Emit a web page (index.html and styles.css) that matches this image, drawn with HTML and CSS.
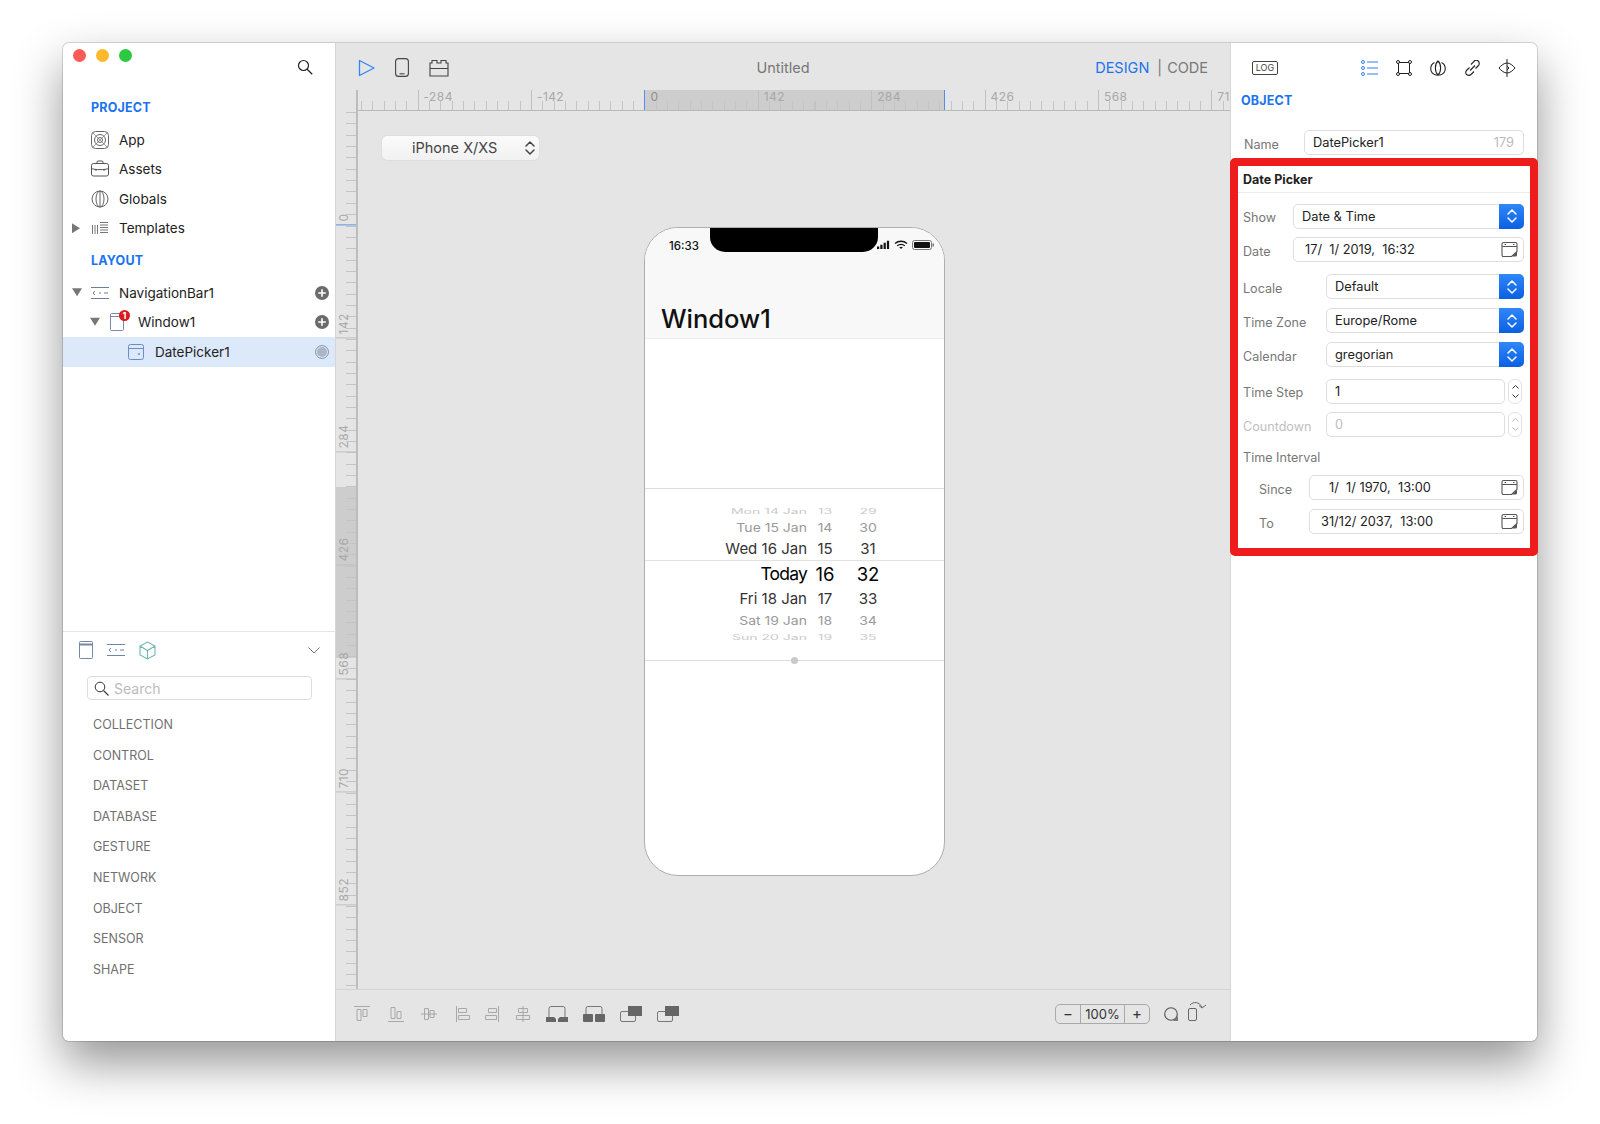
FILE: index.html
```html
<!DOCTYPE html>
<html lang="en">
<head>
    <meta charset="UTF-8">
    <title>Untitled</title>
    <link rel="stylesheet" href="styles.css">
</head>
<body>
    <svg class="defs" width="0" height="0">
        <symbol id="updown" viewBox="0 0 12 18">
            <path d="M2 7 6 3l4 4M2 11l4 4 4-4" fill="none" stroke="currentColor" stroke-width="1.5" stroke-linecap="round" stroke-linejoin="round"/>
        </symbol>
        <symbol id="cal" viewBox="0 0 17 17">
            <path d="M10.500 15.500h-8A1.500 1.500 0 0 1 1 14V3a1.500 1.500 0 0 1 1.500-1.500h12A1.500 1.500 0 0 1 16 3v7.500zM1 5.500h15" fill="none" stroke="#555" stroke-width="1.100"/>
            <path d="M3.500 3.500h1.500M12 3.500h1.500" stroke="#555" stroke-width="1"/>
            <path d="m11 15.500 5-5v3.500a1.500 1.500 0 0 1-1.500 1.500z" fill="#555"/>
        </symbol>
        <symbol id="plus" viewBox="0 0 14 14">
            <circle cx="7" cy="7" r="7" fill="#6b6b6b"/>
            <path d="M7 3.200v7.600M3.200 7h7.600" stroke="#fff" stroke-width="1.600"/>
        </symbol>
        <symbol id="navbar" viewBox="0 0 18 12">
            <path d="M0 .5h18M0 11.500h18" stroke="currentColor"/>
            <path d="M4 4 2 6l2 2M8 6h2M13 6h4" fill="none" stroke="currentColor"/>
        </symbol>
    </svg>

    <div class="window">
        <!-- left column -->
        <aside class="sidebar">
            <div class="side-top">
                <div class="lights">
                    <span class="light red"></span>
                    <span class="light yellow"></span>
                    <span class="light green"></span>
                    <svg class="side-search" width="16" height="16" viewBox="0 0 16 16"><circle cx="6.500" cy="6.500" r="5" fill="none" stroke="#222" stroke-width="1.200"/><path d="m10.200 10.200 5 5" stroke="#222" stroke-width="1.300"/></svg>
                </div>
                <h2 class="side-title">PROJECT</h2>
                <div class="row">
                    <span class="arrow"></span>
                    <svg class="row-icon" viewBox="0 0 18 18" fill="none" stroke="#666"><rect x=".5" y=".5" width="17" height="17" rx="4"/><circle cx="9" cy="9" r="5.500"/><circle cx="9" cy="9" r="2.500"/><path d="m2 2 14 14M16 2 2 16" stroke-width=".6"/></svg>
                    <span>App</span>
                </div>
                <div class="row">
                    <span class="arrow"></span>
                    <svg class="row-icon" viewBox="0 0 18 18" fill="none" stroke="#555"><rect x=".5" y="3.500" width="17" height="12.500" rx="2"/><path d="M6 3.500V2a1 1 0 0 1 1-1h4a1 1 0 0 1 1 1v1.500M.5 8.500c3 1.500 14 1.500 17 0M5 9v2M13 9v2"/></svg>
                    <span>Assets</span>
                </div>
                <div class="row">
                    <span class="arrow"></span>
                    <svg class="row-icon" viewBox="0 0 18 18" fill="none" stroke="#666"><circle cx="9" cy="9" r="8"/><ellipse cx="9" cy="9" rx="4" ry="8"/><path d="M9 1v16"/></svg>
                    <span>Globals</span>
                </div>
                <div class="row">
                    <span class="arrow right"></span>
                    <svg class="row-icon" viewBox="0 0 18 18" fill="none" stroke="#777"><path d="M1.500 6v9M4 6v9M6.500 6v9M9 3.500h8M9 6h8M9 8.500h8M9 11h8M9 13.500h8"/></svg>
                    <span>Templates</span>
                </div>
                <h2 class="side-title">LAYOUT</h2>
                <div class="row">
                    <span class="arrow down"></span>
                    <svg class="row-icon nav-icon" viewBox="0 0 18 12"><use href="#navbar"/></svg>
                    <span class="row-label">NavigationBar1</span>
                    <svg class="row-add" viewBox="0 0 14 14"><use href="#plus"/></svg>
                </div>
                <div class="row lvl2">
                    <span class="arrow down"></span>
                    <span class="win-icon">
                        <svg viewBox="0 0 14 18" fill="none" stroke="#7a8aa8"><rect x=".5" y=".5" width="13" height="17" rx="1"/><path d="M.5 3.500h13"/></svg>
                        <span class="badge">1</span>
                    </span>
                    <span class="row-label">Window1</span>
                    <svg class="row-add" viewBox="0 0 14 14"><use href="#plus"/></svg>
                </div>
                <div class="row lvl3 selected">
                    <span class="arrow"></span>
                    <svg class="row-icon" viewBox="0 0 18 18" fill="none" stroke="#6c8cc4"><rect x="1.500" y="1.500" width="15" height="15" rx="2"/><path d="M1.500 5.500h15"/><circle cx="12" cy="11" r=".6" fill="#6c8cc4"/></svg>
                    <span class="row-label">DatePicker1</span>
                    <span class="row-radio"></span>
                </div>
            </div>

            <div class="library">
                <div class="lib-tabs">
                    <svg width="14" height="18" viewBox="0 0 14 18" fill="none" stroke="#7487a8"><rect x=".5" y=".5" width="13" height="17" rx="1"/><path d="M.5 3.500h13" stroke-width="2"/></svg>
                    <svg class="lib-nav" width="18" height="12" viewBox="0 0 18 12"><use href="#navbar"/></svg>
                    <svg width="17" height="19" viewBox="0 0 17 19" fill="none" stroke="#6fb8b0" stroke-width="1.100"><path d="M8.500 1 16 5v9l-7.500 4L1 14V5zM1 5l7.500 4.500L16 5M8.500 9.500V18"/></svg>
                    <svg class="lib-chevron" width="12" height="7" viewBox="0 0 12 7" fill="none" stroke="#777"><path d="m.5.500 5.500 5.500 5.500-5.500"/></svg>
                </div>
                <div class="lib-search">
                    <svg width="15" height="15" viewBox="0 0 15 15"><circle cx="6" cy="6" r="4.800" fill="none" stroke="#333"/><path d="m9.500 9.500 5 5" stroke="#333" stroke-width="1.100"/></svg>
                    <span>Search</span>
                </div>
                <ul class="lib-list">
                    <li>COLLECTION</li>
                    <li>CONTROL</li>
                    <li>DATASET</li>
                    <li>DATABASE</li>
                    <li>GESTURE</li>
                    <li>NETWORK</li>
                    <li>OBJECT</li>
                    <li>SENSOR</li>
                    <li>SHAPE</li>
                </ul>
            </div>
        </aside>

        <!-- middle column -->
        <main class="center">
            <div class="toolbar">
                <div class="tool-left">
                    <svg width="17" height="18" viewBox="0 0 17 18" fill="none" stroke="#2f86f6" stroke-width="1.300"><path d="M1.500 1.500v15L16 9z" stroke-linejoin="round"/></svg>
                    <svg width="14" height="19" viewBox="0 0 14 19" fill="none" stroke="#444" stroke-width="1.100"><rect x=".6" y=".6" width="12.800" height="17.800" rx="3"/><path d="M4.500 15.800h5"/></svg>
                    <svg width="20" height="18" viewBox="0 0 20 18" fill="none" stroke="#444" stroke-width="1.100"><path d="M1 17V4h2V1.500h5V4h4V1.500h5V4h2v13zM1 9.500h18"/></svg>
                </div>
                <div class="doc-title">Untitled</div>
                <div class="mode"><span class="mode-on">DESIGN</span><span class="mode-sep">|</span><span>CODE</span></div>
            </div>
            <div class="hruler">
                <span>-284</span><span>-142</span><span class="zero">0</span><span>142</span><span>284</span><span>426</span><span>568</span><span>710</span>
            </div>
            <div class="workspace">
                <div class="vruler">
                    <span class="zero">0</span><span>142</span><span>284</span><span>426</span><span>568</span><span>710</span><span>852</span>
                </div>
                <div class="canvas">
                    <div class="device-select">
                        <span>iPhone X/XS</span>
                        <svg width="12" height="18"><use href="#updown"/></svg>
                    </div>
                    <div class="phone">
                        <div class="notch"></div>
                        <div class="phone-head">
                            <div class="status">
                                <span>16:33</span>
                                <svg width="57" height="10" viewBox="0 0 57 10"><path d="M0 6.500h2.200V9H0zM3.300 4.800h2.200V9H3.300zM6.600 2.800h2.200V9H6.600zM9.900 .8h2.200V9H9.900z" fill="#111"/><path d="M18 3.500c3.500-3 8.500-3 12 0M20.200 5.800c2.300-1.800 5.300-1.800 7.600 0" fill="none" stroke="#111" stroke-width="1.300"/><path d="m24 9-1.800-1.800c1.100-.7 2.500-.7 3.600 0z" fill="#111"/><rect x="35.500" y=".5" width="19" height="9" rx="2" fill="none" stroke="#777"/><rect x="37" y="2" width="16" height="6" rx="1" fill="#111"/><rect x="55.500" y="3.500" width="1.500" height="3" fill="#777"/></svg>
                            </div>
                            <h1>Window1</h1>
                        </div>
                        <div class="picker">
                            <div class="pick p1"><span>Mon 14 Jan</span><span>13</span><span>29</span></div>
                            <div class="pick p2"><span>Tue 15 Jan</span><span>14</span><span>30</span></div>
                            <div class="pick p3"><span>Wed 16 Jan</span><span>15</span><span>31</span></div>
                            <div class="pick p4"><span>Today</span><span>16</span><span>32</span></div>
                            <div class="pick p5"><span>Fri 18 Jan</span><span>17</span><span>33</span></div>
                            <div class="pick p6"><span>Sat 19 Jan</span><span>18</span><span>34</span></div>
                            <div class="pick p7"><span>Sun 20 Jan</span><span>19</span><span>35</span></div>
                            <span class="handle"></span>
                        </div>
                    </div>
                </div>
            </div>
            <div class="bottombar">
                <div class="align-group">
                    <svg width="20" height="18" viewBox="0 0 20 18" fill="none" stroke="#a8a8a8"><path d="M2 1.500h16M5 4.500h4v11H5zM11 4.500h4v7h-4z"/></svg>
                    <svg width="20" height="18" viewBox="0 0 20 18" fill="none" stroke="#a8a8a8"><path d="M2 16.500h16M5 2.500h4v11H5zM11 6.500h4v7h-4z"/></svg>
                    <svg width="20" height="18" viewBox="0 0 20 18" fill="none" stroke="#a8a8a8"><path d="M2 9h16M5.500 3.500h4v11h-4zM11 5.500h4v7h-4z"/></svg>
                    <svg width="20" height="18" viewBox="0 0 20 18" fill="none" stroke="#a8a8a8"><path d="M3.500 1v16M5.500 3.500h8v4h-8zM5.500 10.500h11v4h-11z"/></svg>
                </div>
                <div class="align-group tight">
                    <svg width="20" height="18" viewBox="0 0 20 18" fill="none" stroke="#a8a8a8"><path d="M16.500 1v16M6.500 3.500h8v4h-8zM3.500 10.500h11v4h-11z"/></svg>
                    <svg width="20" height="18" viewBox="0 0 20 18" fill="none" stroke="#a8a8a8"><path d="M10 1v16M5.500 3.500h9v4h-9zM3.500 10.500h13v4h-13z"/></svg>
                </div>
                <div class="align-group wide">
                    <svg width="22" height="16" viewBox="0 0 22 16"><path d="M3 12V2.500a2 2 0 0 1 2-2h12a2 2 0 0 1 2 2V12" fill="none" stroke="#777"/><path d="M0 11h8l2 2v3H0zM22 11h-8l-2 2v3h10z" fill="#666"/></svg>
                    <svg width="22" height="16" viewBox="0 0 22 16"><path d="M3 8V2.500a2 2 0 0 1 2-2h12a2 2 0 0 1 2 2V8" fill="none" stroke="#777"/><rect y="8" width="10" height="8" rx="1" fill="#666"/><rect x="12" y="8" width="10" height="8" rx="1" fill="#666"/></svg>
                    <svg width="22" height="16" viewBox="0 0 22 16"><rect x=".5" y="5.500" width="15" height="10" rx="1.500" fill="none" stroke="#777"/><rect x="8" width="14" height="10" fill="#666"/></svg>
                    <svg width="22" height="16" viewBox="0 0 22 16"><rect x=".5" y="5.500" width="15" height="10" rx="1.500" fill="none" stroke="#777"/><rect x="8" width="14" height="10" fill="#666"/></svg>
                </div>
                <div class="zoom">
                    <span class="zoom-btn">−</span>
                    <span class="zoom-val">100%</span>
                    <span class="zoom-btn">+</span>
                </div>
                <svg class="zoom-shape" width="14" height="14" viewBox="0 0 14 14"><circle cx="7" cy="7" r="6.300" fill="none" stroke="#555" stroke-width="1.100"/><path d="M14 14H9l5-5z" fill="#777"/></svg>
                <svg class="zoom-rotate" width="20" height="20" viewBox="0 0 20 20" fill="none" stroke="#666"><rect x=".5" y="7.500" width="8" height="12" rx="1.500"/><path d="M2 4c4-4 9-3 12 2M11 4.500 14 7l4-3"/></svg>
            </div>
        </main>

        <!-- right column -->
        <aside class="inspector">
            <div class="insp-tabs">
                <span class="log">LOG</span>
                <div class="insp-icons">
                    <svg width="18" height="16" viewBox="0 0 18 16" fill="none" stroke="#2f7ff0"><circle cx="2" cy="2" r="1.500"/><circle cx="2" cy="8" r="1.500"/><circle cx="2" cy="14" r="1.500"/><path d="M6 2h11M6 8h11M6 14h11"/></svg>
                    <svg width="16" height="16" viewBox="0 0 16 16" fill="none" stroke="#222"><path d="M3 2.500h10M3 13.500h10M2.500 3v10M13.500 3v10"/><circle cx="2" cy="2" r="1.500"/><circle cx="14" cy="2" r="1.500"/><circle cx="2" cy="14" r="1.500"/><circle cx="14" cy="14" r="1.500"/></svg>
                    <svg width="18" height="16" viewBox="0 0 18 16" fill="none" stroke="#222" stroke-width="1.100"><path d="M9 1C12.500 4 12.500 12 9 15 5.500 12 5.500 4 9 1z"/><path d="M5.500 2.500C.5 5 0 13 7 15h4c7-2 6.500-10 1.500-12.500"/></svg>
                    <svg width="17" height="16" viewBox="0 0 17 16" fill="none" stroke="#222" stroke-width="1.100"><path d="M7 4.500 10 1.500a2.500 2.500 0 0 1 4.500 0c1 1 1 3 0 4l-3 3M10 11.500 7 14.500c-1 1-3 1-4.500 0-1-1-1-3 0-4l3-3M6 10.500 11 5.500"/></svg>
                    <svg width="18" height="18" viewBox="0 0 18 18" fill="none" stroke="#222"><path d="M1 9c2-2.500 5-5 8-5s6 2.500 8 5c-2 2.500-5 5-8 5s-6-2.500-8-5zM9 0v18M9 7l2 2-2 2"/></svg>
                </div>
            </div>
            <h2 class="insp-title">OBJECT</h2>
            <div class="name-row">
                <label>Name</label>
                <div class="field spread"><span>DatePicker1</span><span class="count">179</span></div>
            </div>

            <section class="datepicker-box">
                <h3>Date Picker</h3>
                <div class="form-row first">
                    <label class="lbl-short">Show</label>
                    <div class="field select"><span>Date &amp; Time</span><i class="select-btn"><svg width="12" height="18"><use href="#updown"/></svg></i></div>
                </div>
                <div class="form-row">
                    <label class="lbl-short">Date</label>
                    <div class="field date"><span>17/  1/ 2019,  16:32</span><svg width="17" height="17"><use href="#cal"/></svg></div>
                </div>
                <div class="form-row group">
                    <label class="lbl-long">Locale</label>
                    <div class="field select"><span>Default</span><i class="select-btn"><svg width="12" height="18"><use href="#updown"/></svg></i></div>
                </div>
                <div class="form-row loose">
                    <label class="lbl-long">Time Zone</label>
                    <div class="field select"><span>Europe/Rome</span><i class="select-btn"><svg width="12" height="18"><use href="#updown"/></svg></i></div>
                </div>
                <div class="form-row loose">
                    <label class="lbl-long">Calendar</label>
                    <div class="field select"><span>gregorian</span><i class="select-btn"><svg width="12" height="18"><use href="#updown"/></svg></i></div>
                </div>
                <div class="form-row step-row">
                    <label class="lbl-long">Time Step</label>
                    <div class="field"><span>1</span></div>
                    <div class="stepper"><svg width="9" height="19" viewBox="0 0 9 19" fill="none" stroke="#333"><path d="m1.500 6.500 3-3 3 3M1.500 12.500l3 3 3-3"/></svg></div>
                </div>
                <div class="form-row off">
                    <label class="lbl-long">Countdown</label>
                    <div class="field"><span>0</span></div>
                    <div class="stepper"><svg width="9" height="19" viewBox="0 0 9 19" fill="none" stroke="#bbb"><path d="m1.500 6.500 3-3 3 3M1.500 12.500l3 3 3-3"/></svg></div>
                </div>
                <div class="interval-label">Time Interval</div>
                <div class="form-row nested since-row">
                    <label class="lbl-short">Since</label>
                    <div class="field date since"><span>1/  1/ 1970,  13:00</span><svg width="17" height="17"><use href="#cal"/></svg></div>
                </div>
                <div class="form-row nested">
                    <label class="lbl-short">To</label>
                    <div class="field date"><span>31/12/ 2037,  13:00</span><svg width="17" height="17"><use href="#cal"/></svg></div>
                </div>
            </section>
        </aside>
    </div>
</body>
</html>
```
FILE: styles.css
```css
* {
    box-sizing: border-box;
}

html, body {
    margin: 0;
    padding: 0;
    height: 100%;
}

body {
    background-color: #fff;
    padding: 43px 63px;
    font-family: Inter, "Open Sans", sans-serif;
    font-size: 12.800px;
    color: #222;
    overflow: hidden;
}

.defs {
    position: absolute;
}

.window {
    display: flex;
    width: 1474px;
    height: 998px;
    background-color: #fff;
    border-radius: 6px;
    box-shadow: 0 0 0 1px rgba(0, 0, 0, 0.14), 0 22px 48px rgba(0, 0, 0, 0.42);
}

/* Sidebar */
.sidebar {
    display: flex;
    flex-direction: column;
    width: 273px;
    flex-shrink: 0;
    border-right: 1px solid #d6d6d6;
}

.side-top {
    flex: 1;
}

.lights {
    display: flex;
    align-items: flex-start;
    height: 47px;
    padding: 6px 0 0 10px;
    gap: 10px;
}

.light {
    width: 13px;
    height: 13px;
    border-radius: 50%;
}

.light.red { background-color: #fc5b57; }
.light.yellow { background-color: #fdb92c; }
.light.green { background-color: #2bc840; }

.side-search {
    margin: 10px 0 0 155px;
}

.side-title {
    display: flex;
    align-items: center;
    height: 35px;
    margin: 0;
    padding-left: 28px;
    font-size: 12.500px;
    font-weight: 700;
    letter-spacing: 0.2px;
    color: #1a73f0;
}

.row {
    display: flex;
    align-items: center;
    height: 29.500px;
    padding-left: 9px;
    font-size: 13.500px;
    color: #222;
}

.row.lvl2 { padding-left: 27px; }
.row.lvl3 { padding-left: 45px; }

.row.selected {
    background-color: #dce9fb;
}

.arrow {
    width: 10px;
    margin-right: 9px;
    height: 10px;
}

.arrow.right {
    background: linear-gradient(#777, #777);
    clip-path: polygon(0 0, 80% 50%, 0 100%);
}

.arrow.down {
    background: linear-gradient(#777, #777);
    clip-path: polygon(0 5%, 100% 5%, 50% 85%);
}

.row-icon {
    width: 18px;
    height: 18px;
    margin-right: 10px;
    flex-shrink: 0;
}

.nav-icon {
    height: 12px;
    color: #6d7f9f;
}

.win-icon {
    position: relative;
    width: 14px;
    height: 18px;
    margin: 0 14px 0 1px;
}

.win-icon svg {
    display: block;
}

.badge {
    position: absolute;
    top: -3px;
    right: -6px;
    width: 11px;
    height: 11px;
    border-radius: 50%;
    background-color: #d81b1b;
    color: #fff;
    font-size: 9px;
    font-weight: 700;
    line-height: 11px;
    text-align: center;
}

.row-label {
    flex: 1;
}

.row-add {
    width: 14px;
    height: 14px;
    margin-right: 6px;
}

.row-radio {
    width: 14px;
    height: 14px;
    margin-right: 6px;
    border-radius: 50%;
    border: 1px solid #8d9bb0;
    background-color: #aab6c8;
    box-shadow: inset 0 0 0 1px #dce9fb;
}

/* Library under the tree */
.library {
    height: 410px;
    border-top: 1px solid #e4e4e4;
    padding-top: 9px;
}

.lib-tabs {
    display: flex;
    align-items: center;
    height: 18px;
    padding-left: 16px;
    gap: 14px;
}

.lib-nav {
    color: #6d84ab;
}

.lib-chevron {
    margin-left: 138px;
}

.lib-search {
    display: flex;
    align-items: center;
    gap: 5px;
    width: 225px;
    height: 24px;
    margin: 17px 0 0 24px;
    padding-left: 6px;
    border: 1px solid #dcdcdc;
    border-radius: 4px;
    color: #bbb;
    font-size: 14px;
}

.lib-list {
    list-style: none;
    margin: 10px 0 0;
    padding: 0 0 0 30px;
    color: #707070;
    font-size: 12.500px;
}

.lib-list li {
    height: 30.600px;
    line-height: 30.600px;
}

/* Centre column */
.center {
    display: flex;
    flex-direction: column;
    flex: 1;
    min-width: 0;
    background-color: #e5e5e5;
}

.toolbar {
    display: grid;
    grid-template-columns: 1fr auto 1fr;
    align-items: center;
    height: 47px;
    padding: 2px 22px 0 22px;
    flex-shrink: 0;
}

.tool-left {
    display: flex;
    align-items: center;
    gap: 20px;
}

.doc-title {
    color: #777;
    font-size: 14.500px;
}

.mode {
    text-align: right;
    font-size: 14.500px;
    color: #777;
}

.mode-on {
    color: #1a73f0;
}

.mode-sep {
    margin: 0 5px 0 8px;
}

.hruler {
    display: flex;
    flex-shrink: 0;
    height: 21px;
    margin-left: 20px;
    padding-left: 59.600px;
    overflow: hidden;
    border-left: 2px solid #bdbdbd;
    border-bottom: 1.500px solid #b9b9b9;
    background-image:
        repeating-linear-gradient(to right, transparent 0, transparent 2.900px, #c4c4c4 2.900px, #c4c4c4 3.900px, transparent 3.900px, transparent 11.340px),
        linear-gradient(to right, transparent 286px, #cdcdcd 286px, #cdcdcd 586px, #4f8ff0 586px, #4f8ff0 587px, transparent 587px);
    background-size: 100% 9px, 100% 100%;
    background-position: left bottom, left top;
    background-repeat: no-repeat;
}

.hruler span {
    flex: 0 0 113.400px;
    padding: 0 0 0 5px;
    border-left: 1px solid #c0c0c0;
    color: #a8a8a8;
    font-size: 12px;
    line-height: 14px;
    letter-spacing: 0.4px;
}

.hruler span.zero {
    border-left-color: #4f8ff0;
    color: #8f8f8f;
}

.workspace {
    display: flex;
    flex: 1;
    min-height: 0;
}

.vruler {
    display: flex;
    flex-direction: column;
    flex-shrink: 0;
    width: 20px;
    padding-top: 1.100px;
    overflow: hidden;
    background-image:
        repeating-linear-gradient(to bottom, transparent 0, transparent 1.100px, #c4c4c4 1.100px, #c4c4c4 2.100px, transparent 2.100px, transparent 11.340px),
        linear-gradient(to bottom, transparent 376.500px, #cdcdcd 376.500px, #cdcdcd 547px, transparent 547px);
    background-size: 10px 100%, 100% 100%;
    background-position: right top, left top;
    background-repeat: no-repeat;
}

.vruler span {
    display: flex;
    align-items: flex-start;
    justify-content: flex-start;
    flex: 0 0 113.400px;
    padding: 3px 0 0 0;
    writing-mode: vertical-rl;
    transform: rotate(180deg);
    border-top: 1px solid #c0c0c0;
    color: #a8a8a8;
    font-size: 12px;
    line-height: 16px;
    letter-spacing: 0.4px;
}

.vruler span.zero {
    border-top-color: #5a93e6;
}

.canvas {
    flex: 1;
    min-width: 0;
    padding: 25px 0 0 24px;
    overflow: hidden;
    border-left: 2px solid #bdbdbd;
}

.device-select {
    display: flex;
    align-items: center;
    justify-content: space-between;
    width: 157px;
    height: 24px;
    padding: 0 3px 1px 30px;
    border-radius: 5px;
    background: linear-gradient(#fbfbfb, #f1f1f1);
    box-shadow: 0 0 1px rgba(0, 0, 0, 0.3);
    color: #444;
    font-size: 14.500px;
}

.phone {
    position: relative;
    width: 301px;
    height: 649px;
    margin: 67px 0 0 262px;
    overflow: hidden;
    background-color: #fff;
    border: 1px solid #adadad;
    border-radius: 34px;
}

.notch {
    position: absolute;
    top: -1px;
    left: 65px;
    width: 168px;
    height: 25px;
    background-color: #000;
    border-radius: 0 0 15px 15px;
}

.phone-head {
    height: 111px;
    padding: 11px 10px 0 24px;
    background-color: #f8f8f8;
    border-bottom: 1px solid #ececec;
}

.status {
    display: flex;
    align-items: center;
    justify-content: space-between;
    height: 14px;
    font-size: 11.500px;
    font-weight: 500;
    color: #111;
}

.status svg {
    margin-top: -3px;
}

.phone-head h1 {
    margin: 50px 0 0 -8px;
    font-size: 25.500px;
    font-weight: 500;
    line-height: 32px;
    color: #111;
}

.picker {
    position: relative;
    height: 173px;
    margin-top: 149px;
    padding-top: 14px;
    border-top: 1px solid #dcdcdc;
    border-bottom: 1px solid #dcdcdc;
}

.pick {
    display: grid;
    grid-template-columns: 162px 36px 50px;
    align-items: center;
    text-align: center;
}

.pick span:first-child {
    text-align: right;
}

.p1, .p7 { font-size: 14px; color: #cbcbcb; }
.p2, .p6 { font-size: 14px; color: #9a9a9a; }
.p3, .p5 { font-size: 15px; color: #333; }
.p4 { font-size: 18.500px; color: #000; }

.p4 span:first-child {
    font-size: 17.500px;
    letter-spacing: -0.8px;
}

.p1 { height: 16px; transform: scaleY(0.5); }
.p2 { height: 17px; transform: scaleY(0.88); }
.p3 { height: 24px; }
.p4 { height: 26px; border-top: 1px solid #e2e2e2; }
.p5 { height: 25px; }
.p6 { height: 18px; transform: scaleY(0.88); }
.p7 { height: 14px; transform: scaleY(0.5); }

.handle {
    position: absolute;
    left: 146px;
    bottom: -4px;
    width: 7px;
    height: 7px;
    border-radius: 50%;
    background-color: #c9c9c9;
}

.bottombar {
    display: flex;
    align-items: center;
    flex-shrink: 0;
    height: 52px;
    padding: 0 0 4px 16px;
    border-top: 1px solid #d4d4d4;
}

.align-group {
    display: flex;
    align-items: center;
    gap: 13.500px;
}

.align-group.tight {
    gap: 11px;
    margin-left: 9px;
}

.align-group.wide {
    gap: 15px;
    margin-left: 13.500px;
}

.zoom {
    display: flex;
    width: 95px;
    height: 20px;
    margin-left: 376px;
    border: 1px solid #a9a9a9;
    border-radius: 5px;
    color: #333;
    font-size: 13px;
    line-height: 18px;
    text-align: center;
}

.zoom-btn {
    flex: 0 0 24px;
    font-size: 15px;
}

.zoom-val {
    flex: 1;
    border-left: 1px solid #a9a9a9;
    border-right: 1px solid #a9a9a9;
}

.zoom-shape {
    margin-left: 14px;
}

.zoom-rotate {
    margin: -6px 0 0 10px;
}

/* Right column */
.inspector {
    width: 307px;
    flex-shrink: 0;
    border-left: 1px solid #d6d6d6;
}

.insp-tabs {
    display: flex;
    align-items: center;
    justify-content: space-between;
    height: 49px;
    padding: 0 21px 0 21px;
}

.log {
    width: 26px;
    height: 14px;
    border: 1px solid #444;
    border-radius: 2px;
    color: #444;
    font-size: 9px;
    line-height: 12px;
    text-align: center;
}

.insp-icons {
    display: flex;
    align-items: center;
    gap: 17px;
}

.insp-title {
    margin: 0;
    padding-left: 10px;
    height: 17px;
    font-size: 12.500px;
    font-weight: 700;
    letter-spacing: 0.2px;
    line-height: 17px;
    color: #1a73f0;
}

.name-row {
    display: flex;
    align-items: center;
    height: 25px;
    margin: 21px 13px 3px 13px;
}

.name-row label {
    flex: 0 0 60px;
    padding-top: 3px;
    color: #777;
    font-size: 12.600px;
}

.field {
    display: flex;
    align-items: center;
    flex: 1;
    height: 25px;
    padding-left: 8px;
    background-color: #fff;
    border: 1px solid #dedede;
    border-radius: 5px;
    color: #222;
    min-width: 0;
}

.field.spread {
    justify-content: space-between;
    padding-right: 9px;
}

.count {
    color: #bbb;
}

.datepicker-box {
    width: 308px;
    height: 398px;
    margin-left: -1px;
    border: 8px solid #ee1c1c;
    border-radius: 5px;
}

.datepicker-box h3 {
    height: 27px;
    margin: 0;
    padding-left: 5px;
    border-bottom: 1px solid #eaeaea;
    font-size: 12.500px;
    font-weight: 700;
    line-height: 28px;
    color: #222;
}

.form-row {
    display: flex;
    align-items: center;
    height: 25px;
    margin: 8.500px 6px 0 5px;
}

.form-row.first { margin-top: 10.500px; }
.form-row.group { margin-top: 12px; }
.form-row.loose { margin-top: 9px; }
.form-row.step-row { margin-top: 11.500px; }

.form-row label {
    color: #777;
    font-size: 12.600px;
    padding-top: 3px;
    flex-shrink: 0;
}

.lbl-short { width: 50px; }
.lbl-long { width: 83px; }

.field.select {
    justify-content: space-between;
    padding-right: 0;
}

.select-btn {
    display: flex;
    align-items: center;
    justify-content: center;
    width: 25px;
    height: 25px;
    margin-right: -1px;
    border-radius: 0 5px 5px 0;
    background: linear-gradient(#2f87f8, #0b60e2);
    color: #fff;
}

.field.date {
    justify-content: space-between;
    padding: 0 5px 0 11px;
    white-space: pre;
}

.field.date.since {
    padding-left: 19px;
}

.stepper {
    display: flex;
    align-items: center;
    justify-content: center;
    width: 14px;
    height: 25px;
    margin: 0 2px 0 3px;
    background-color: #fff;
    border: 1px solid #e2e2e2;
    border-radius: 6px;
}

.form-row.off label,
.form-row.off .field {
    color: #c0c0c0;
}

.interval-label {
    margin: 12.500px 0 0 5px;
    height: 16px;
    line-height: 16px;
    color: #777;
    font-size: 12.600px;
}

.form-row.nested {
    padding-left: 16px;
    margin-top: 9px;
}

.form-row.since-row {
    margin-top: 9.500px;
}
```
